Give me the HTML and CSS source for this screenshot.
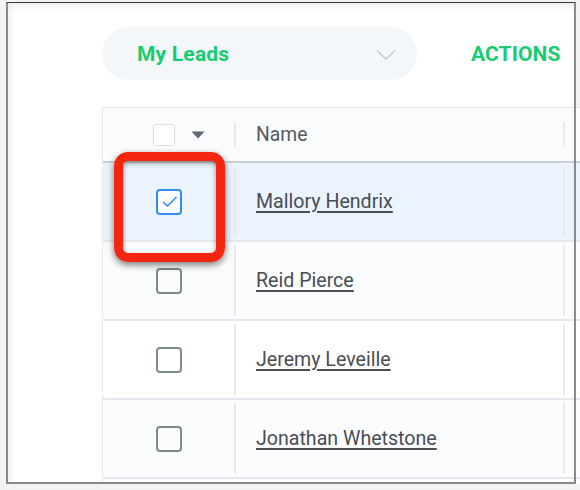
FILE: index.html
```html
<!DOCTYPE html>
<html>
<head>
<meta charset="utf-8">
<link rel="stylesheet" href="styles.css">
</head>
<body>
<div class="window">
  <div class="toolbar">
    <div class="select">
      <span class="select-label">My Leads</span>
      <svg class="chevron" width="20" height="12" viewBox="0 0 20 12"><path d="M1 1.5 L10 10 L19 1.5" fill="none" stroke="#c3c9cf" stroke-width="1.4"/></svg>
    </div>
    <span class="actions">ACTIONS</span>
  </div>
  <div class="table">
    <div class="thead">
      <div class="cell-check head-check">
        <span class="box box-head"></span>
        <svg class="caret" width="14" height="8" viewBox="0 0 14 8"><path d="M0.5 0.5 L13.5 0.5 L7 7.5 Z" fill="#5b6877"/></svg>
      </div>
      <div class="cell-name head-name">Name</div>
      <div class="cell-rest head-rest"></div>
    </div>
    <div class="row selected">
      <div class="cell-check"><span class="box box-on"><svg width="17" height="13" viewBox="0 0 17 13"><path d="M2 7 L6.5 11 L15.5 2" fill="none" stroke="#2f8ded" stroke-width="1.6"/></svg></span></div>
      <div class="cell-name"><a class="name-link">Mallory Hendrix</a></div>
      <div class="cell-rest"></div>
    </div>
    <div class="row">
      <div class="cell-check"><span class="box"></span></div>
      <div class="cell-name"><a class="name-link">Reid Pierce</a></div>
      <div class="cell-rest"></div>
    </div>
    <div class="row white">
      <div class="cell-check"><span class="box"></span></div>
      <div class="cell-name"><a class="name-link">Jeremy Leveille</a></div>
      <div class="cell-rest"></div>
    </div>
    <div class="row">
      <div class="cell-check"><span class="box"></span></div>
      <div class="cell-name"><a class="name-link">Jonathan Whetstone</a></div>
      <div class="cell-rest"></div>
    </div>
    <div class="row white">
      <div class="cell-check"><span class="box"></span></div>
      <div class="cell-name"></div>
      <div class="cell-rest"></div>
    </div>
    <div class="highlight"></div>
  </div>
</div>
</body>
</html>
```
FILE: styles.css
```css
html, body {
  margin: 0;
  padding: 0;
}
body {
  background: #f3f3f3;
  width: 580px;
  height: 490px;
  overflow: hidden;
  font-family: Roboto, "Liberation Sans", sans-serif;
}
.window {
  position: relative;
  margin: 2px 0 0 6px;
  width: 570px;
  height: 482px;
  background: #fff;
  overflow-x: visible;
  overflow-y: clip;
}
.window::after {
  content: "";
  position: absolute;
  inset: 0;
  border-top: 1px solid #3a3a3a;
  border-left: 2px solid #8a8a8a;
  border-right: 2px solid #8a8a8a;
  border-bottom: 2px solid #8a8a8a;
  box-shadow: inset 2px 3px 6px rgba(0,0,0,0.08);
  pointer-events: none;
}
.toolbar {
  display: flex;
  align-items: center;
  padding: 25px 0 0 96px;
  height: 53px;
}
.select {
  width: 315px;
  height: 53px;
  border-radius: 27px;
  background: #f4f7fa;
  display: flex;
  align-items: center;
  justify-content: space-between;
  padding: 0 21px 0 35px;
  box-sizing: border-box;
}
.select-label {
  color: #18cc72;
  font-weight: 700;
  font-size: 21px;
  letter-spacing: 0.2px;
}
.chevron {
  margin-top: 2px;
}
.actions {
  margin-left: 54px;
  color: #18cc72;
  font-weight: 700;
  font-size: 21px;
  letter-spacing: 0.1px;
}
.table {
  position: relative;
  margin: 27px 0 0 96px;
  width: 478px;
  border-left: 1px solid #e6e9ed;
}
.thead {
  display: flex;
  height: 53px;
  border-top: 1px solid #e3e6ea;
  border-bottom: 2px solid #c9ced4;
  background: #fafbfc;
}
.row {
  display: flex;
  height: 77px;
  border-bottom: 2px solid #e4e7eb;
  background: #fbfcfe;
}
.row.white {
  background: #ffffff;
}
.row.selected {
  background: #ebf3fd;
}
.cell-check {
  width: 131px;
  display: flex;
  align-items: center;
  justify-content: center;
}
.head-check {
  justify-content: flex-start;
  padding-left: 50px;
  box-sizing: border-box;
  gap: 16px;
}
.cell-name {
  width: 329px;
  border-left: 2px solid #e6e9ed;
  margin: 3px 0;
  display: flex;
  align-items: center;
  padding-left: 20px;
  box-sizing: border-box;
}
.cell-rest {
  flex: 1;
  border-left: 2px solid #e6e9ed;
  margin: 3px 0;
}
.head-name, .head-rest {
  margin: 14px 0;
}
.head-name {
  color: #555a60;
  font-size: 19.3px;
}
.box {
  width: 22px;
  height: 22px;
  border: 2px solid #7d8b8b;
  border-radius: 4px;
  display: flex;
  align-items: center;
  justify-content: center;
  margin-left: 1px;
}
.box-head {
  width: 20px;
  height: 20px;
  border: 1.5px solid #d9dee3;
  border-radius: 3px;
  background: #fff;
  margin-left: 0;
}
.box-on {
  border-color: #2f8ded;
  background: #fff;
}
.caret {
  margin-top: 1px;
}
.name-link {
  color: #4a4d52;
  font-size: 19.6px;
  text-decoration: underline;
  text-underline-offset: 3px;
  text-decoration-thickness: 1.5px;
}
.highlight {
  position: absolute;
  left: 11px;
  top: 45px;
  width: 93px;
  height: 92px;
  border: 9px solid #f4260f;
  border-radius: 14px;
  box-shadow: 0 3px 7px rgba(0,0,0,0.5), inset 0 2px 5px rgba(0,0,0,0.4);
}
```
